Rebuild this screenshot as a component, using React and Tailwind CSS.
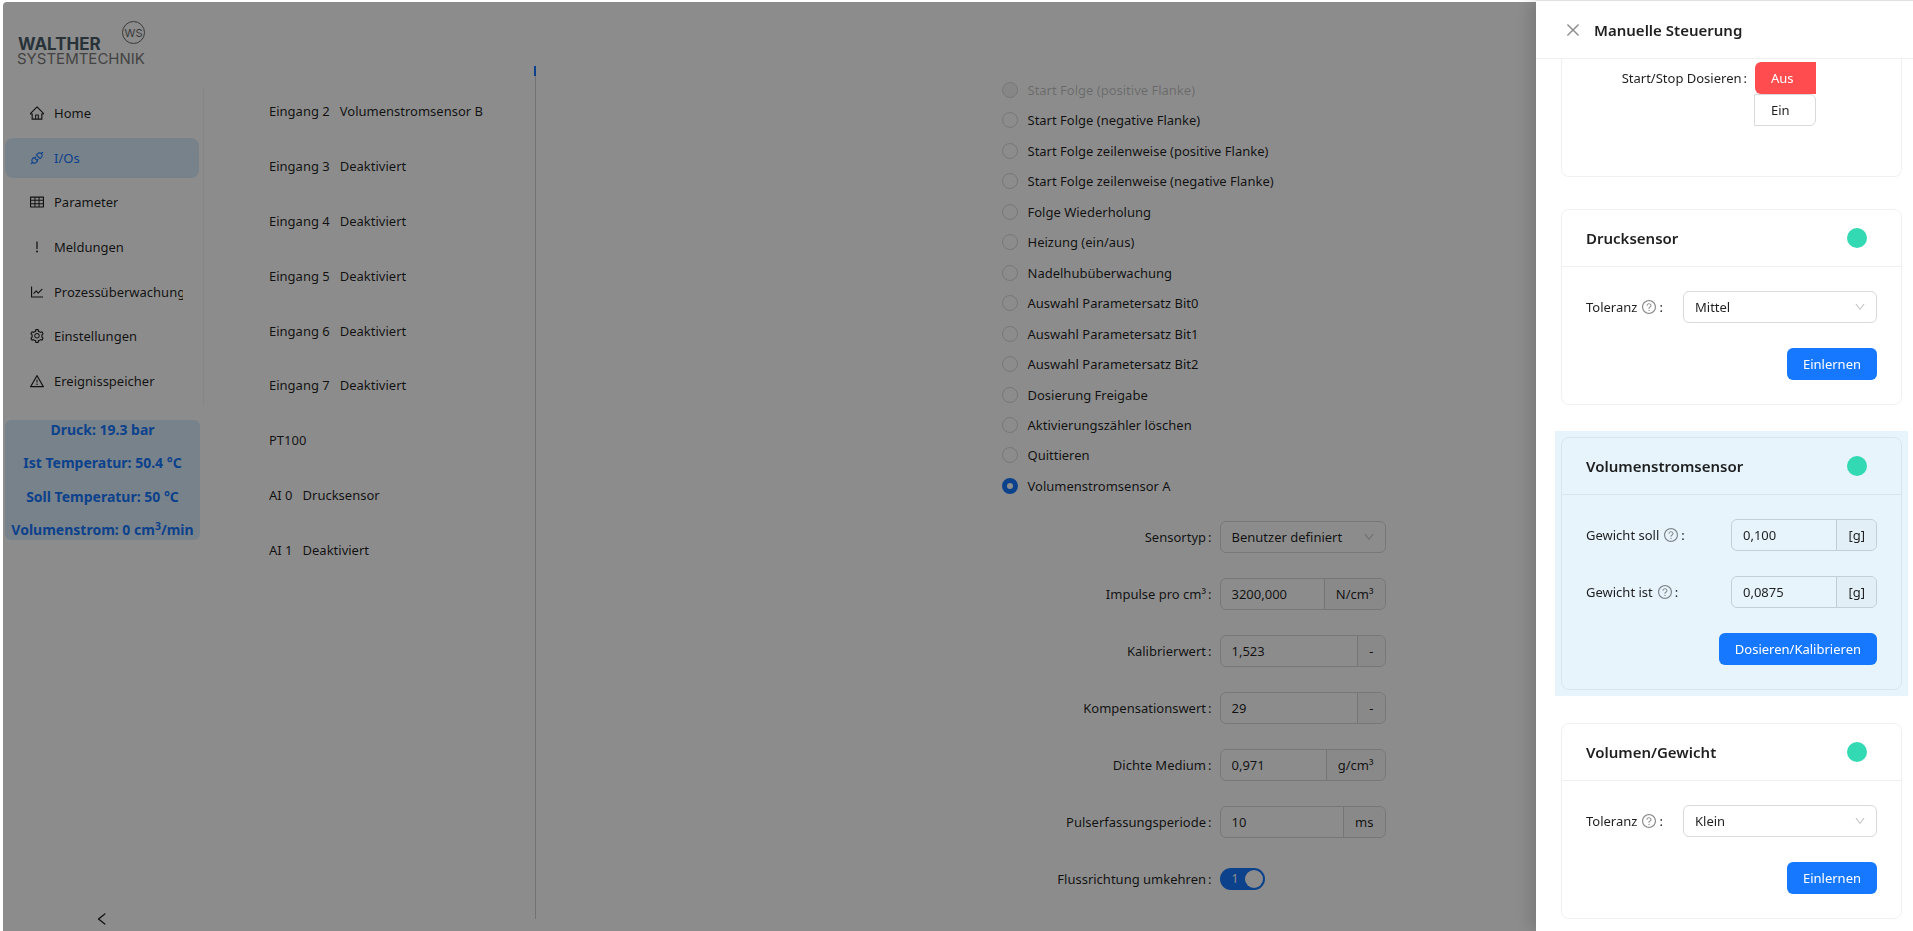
import React, { useState } from 'react';
import {
  AiOutlineApi,
  AiOutlineClose,
  AiOutlineDown,
  AiOutlineExclamation,
  AiOutlineHome,
  AiOutlineLeft,
  AiOutlineLineChart,
  AiOutlineQuestionCircle,
  AiOutlineSetting,
  AiOutlineTable,
  AiOutlineWarning,
} from 'react-icons/ai';

const menuItems = [
  { label: 'Home', icon: AiOutlineHome },
  { label: 'I/Os', icon: AiOutlineApi },
  { label: 'Parameter', icon: AiOutlineTable },
  { label: 'Meldungen', icon: AiOutlineExclamation },
  { label: 'Prozessüberwachung', icon: AiOutlineLineChart },
  { label: 'Einstellungen', icon: AiOutlineSetting },
  { label: 'Ereignisspeicher', icon: AiOutlineWarning },
];

const channels = [
  ['Eingang 2', 'Volumenstromsensor B'],
  ['Eingang 3', 'Deaktiviert'],
  ['Eingang 4', 'Deaktiviert'],
  ['Eingang 5', 'Deaktiviert'],
  ['Eingang 6', 'Deaktiviert'],
  ['Eingang 7', 'Deaktiviert'],
  ['PT100', ''],
  ['AI 0', 'Drucksensor'],
  ['AI 1', 'Deaktiviert'],
];

const functions = [
  'Start Folge (positive Flanke)',
  'Start Folge (negative Flanke)',
  'Start Folge zeilenweise (positive Flanke)',
  'Start Folge zeilenweise (negative Flanke)',
  'Folge Wiederholung',
  'Heizung (ein/aus)',
  'Nadelhubüberwachung',
  'Auswahl Parametersatz Bit0',
  'Auswahl Parametersatz Bit1',
  'Auswahl Parametersatz Bit2',
  'Dosierung Freigabe',
  'Aktivierungszähler löschen',
  'Quittieren',
  'Volumenstromsensor A',
];

const sensorFields = [
  { id: 'impulse', label: 'Impulse pro cm³', value: '3200,000', unit: 'N/cm³' },
  { id: 'kalibrierwert', label: 'Kalibrierwert', value: '1,523', unit: '-' },
  { id: 'kompensation', label: 'Kompensationswert', value: '29', unit: '-' },
  { id: 'dichte', label: 'Dichte Medium', value: '0,971', unit: 'g/cm³' },
  { id: 'periode', label: 'Pulserfassungsperiode', value: '10', unit: 'ms' },
];

const Logo = () => (
  <div className="ml-3.5 w-[134px] font-['Inter',sans-serif]">
    <div className="flex items-end justify-between pr-1.5 pl-px">
      <span className="text-[17px] leading-4 font-bold text-[#4a5c68]">WALTHER</span>
      <span className="mb-2 flex size-[23px] items-center justify-center rounded-full border border-[#6a6a6a] text-[11px] text-[#6a6a6a]">
        WS
      </span>
    </div>
    <p className="text-[15px] leading-[14px] text-[#7a7a7a]">SYSTEMTECHNIK</p>
  </div>
);

const Select = ({ id, value, className }) => (
  <div className={`relative ${className}`}>
    <select
      id={id}
      defaultValue={value}
      className="h-8 w-full appearance-none rounded-md border border-[#d9d9d9] bg-transparent px-[11px] outline-none focus:border-[#1677ff]"
    >
      <option>{value}</option>
    </select>
    <AiOutlineDown className="pointer-events-none absolute top-2.5 right-[11px] size-3 text-black/25" />
  </div>
);

const UnitInput = ({ id, value, unit, className }) => (
  <div className={`flex h-8 rounded-md border border-black/15 ${className}`}>
    <input
      id={id}
      type="text"
      defaultValue={value}
      className="min-w-0 flex-1 rounded-l-md bg-transparent px-[11px] outline-none"
    />
    <span className="flex items-center rounded-r-md border-l border-black/15 bg-black/2 px-[11px]">{unit}</span>
  </div>
);

const FormRow = ({ id, label, children }) => (
  <div className="flex items-center gap-2">
    <label htmlFor={id} className="w-[210px] text-right">
      {label}
      <span className="ml-0.5">:</span>
    </label>
    {children}
  </div>
);

const HelpLabel = ({ id, children }) => (
  <label htmlFor={id} className="flex items-center">
    {children}
    <AiOutlineQuestionCircle className="ml-1 size-4 text-black/45" />
    <span className="ml-0.5">:</span>
  </label>
);

const PrimaryButton = ({ children }) => (
  <button className="h-8 self-end rounded-md bg-[#1677ff] px-4 text-white hover:bg-[#4096ff]">{children}</button>
);

const SensorCard = ({ title, children }) => (
  <section className="rounded-lg border border-black/6">
    <header className="flex h-[57px] items-center justify-between border-b border-black/6 pr-[34px] pl-6">
      <h3 className="text-[15px] font-semibold">{title}</h3>
      <span className="size-5 rounded-full bg-[#33d9b2]" />
    </header>
    <div className="flex flex-col gap-[25px] p-6">{children}</div>
  </section>
);

const Sidebar = () => (
  <aside className="flex w-[201px] shrink-0 flex-col pt-[21px]">
    <Logo />
    <nav className="mt-[22px] flex h-[317px] flex-col justify-between border-r border-black/4 pt-[5px] pb-1 pl-0.5">
      {menuItems.map(({ label, icon: Icon }) => (
        <a
          key={label}
          href="#"
          className={`mr-1 flex h-10 items-center gap-[9px] rounded-lg pr-4 pl-6 ${
            label === 'I/Os' ? 'bg-[#dbedfc] text-[#1677ff]' : ''
          }`}
        >
          <Icon className="size-4 shrink-0" />
          <span className="overflow-hidden whitespace-nowrap">{label}</span>
        </a>
      ))}
    </nav>
    <div className="mt-[15px] mr-1 ml-0.5 flex h-[120px] flex-col justify-between rounded-md bg-[#dbedfc] text-center text-sm leading-5 font-bold text-[#1677ff]">
      <p>Druck: 19.3 bar</p>
      <p>Ist Temperatur: 50.4 °C</p>
      <p>Soll Temperatur: 50 °C</p>
      <p>
        Volumenstrom: 0 cm<sup>3</sup>/min
      </p>
    </div>
    <button aria-label="Menü einklappen" className="mt-auto mr-1 mb-1 self-center">
      <AiOutlineLeft className="size-4" />
    </button>
  </aside>
);

const Drawer = () => {
  const [dosing, setDosing] = useState(false);

  return (
    <aside className="fixed inset-y-0 right-0 flex w-[377px] flex-col overflow-hidden border-t border-[#e0e0e0] bg-white shadow-[-6px_0_16px_rgba(0,0,0,0.15)]">
      <header className="flex h-[58px] shrink-0 items-center gap-3 border-b border-black/6 px-7">
        <button aria-label="Schließen" className="text-black/45">
          <AiOutlineClose className="size-[18px]" />
        </button>
        <h2 className="text-[15px] font-semibold">Manuelle Steuerung</h2>
      </header>

      <div className="flex flex-col pr-[5px] pl-[19px]">
        <section className="mx-1.5 mb-8 h-[118px] rounded-b-lg border border-t-0 border-black/6 pt-[3px] pr-[85px]">
          <div className="flex justify-end gap-2">
            <span className="leading-8">
              Start/Stop Dosieren<span className="ml-0.5">:</span>
            </span>
            <div className="flex w-[61px] flex-col">
              <button
                aria-pressed={!dosing}
                onClick={() => setDosing(false)}
                className="h-8 rounded-l-md bg-[#ff4d4f] px-4 text-left text-white"
              >
                Aus
              </button>
              <button
                aria-pressed={dosing}
                onClick={() => setDosing(true)}
                className="-ml-px h-8 rounded-r-md border border-[#d9d9d9] px-4 text-left"
              >
                Ein
              </button>
            </div>
          </div>
        </section>

        <div className="mx-1.5 mb-[26px]">
          <SensorCard title="Drucksensor">
            <div className="flex items-center justify-between">
              <HelpLabel id="toleranz-druck">Toleranz</HelpLabel>
              <Select id="toleranz-druck" value="Mittel" className="w-[194px]" />
            </div>
            <PrimaryButton>Einlernen</PrimaryButton>
          </SensorCard>
        </div>

        <div className="mb-[27px] bg-[#e7f4fb] p-1.5">
          <SensorCard title="Volumenstromsensor">
            <div className="flex items-center justify-between">
              <HelpLabel id="gewicht-soll">Gewicht soll</HelpLabel>
              <UnitInput id="gewicht-soll" value="0,100" unit="[g]" className="w-[146px]" />
            </div>
            <div className="flex items-center justify-between">
              <HelpLabel id="gewicht-ist">Gewicht ist</HelpLabel>
              <UnitInput id="gewicht-ist" value="0,0875" unit="[g]" className="w-[146px]" />
            </div>
            <PrimaryButton>Dosieren/Kalibrieren</PrimaryButton>
          </SensorCard>
        </div>

        <div className="mx-1.5">
          <SensorCard title="Volumen/Gewicht">
            <div className="flex items-center justify-between">
              <HelpLabel id="toleranz-volumen">Toleranz</HelpLabel>
              <Select id="toleranz-volumen" value="Klein" className="w-[194px]" />
            </div>
            <PrimaryButton>Einlernen</PrimaryButton>
          </SensorCard>
        </div>
      </div>
    </aside>
  );
};

const App = () => {
  const [selected, setSelected] = useState('Volumenstromsensor A');
  const [reversed, setReversed] = useState(true);

  return (
    <div className="font-['Noto_Sans',sans-serif] text-[13px] leading-5 text-black/88">
      <div className="flex min-h-screen pl-[3px]">
        <Sidebar />

        {/* Channel list */}
        <div className="mt-[66px] mb-3 flex w-[332px] shrink-0">
          <ul className="mt-[34px] flex h-[461px] flex-1 flex-col justify-between pl-[65px]">
            {channels.map(([name, value]) => (
              <li key={name} className="flex h-[22px] items-center gap-2.5">
                <span>{name}</span>
                <span>{value}</span>
              </li>
            ))}
          </ul>
          <div className="w-0.5 border-r border-[#d0d0d0]">
            <div className="h-2.5 w-0.5 bg-[#1677ff]" />
          </div>
        </div>

        {/* Channel settings */}
        <main className="flex-1 pt-[79px] pb-8">
          <div className="mx-auto w-[446px]">
            <fieldset className="flex h-[418px] flex-col justify-between">
              {functions.map((name, i) => (
                <label key={name} className={`flex items-center gap-2.5 leading-[22px] ${i === 0 ? 'text-black/25' : ''}`}>
                  <input
                    type="radio"
                    name="function"
                    disabled={i === 0}
                    checked={selected === name}
                    onChange={() => setSelected(name)}
                    className="size-4 appearance-none rounded-full border border-[#d9d9d9] checked:border-[5px] checked:border-[#1677ff] disabled:bg-black/4"
                  />
                  {name}
                </label>
              ))}
            </fieldset>

            <div className="mt-6 flex flex-col gap-[25px]">
              <FormRow id="sensortyp" label="Sensortyp">
                <Select id="sensortyp" value="Benutzer definiert" className="w-[166px]" />
              </FormRow>
              {sensorFields.map(({ id, label, value, unit }) => (
                <FormRow key={id} id={id} label={label}>
                  <UnitInput id={id} value={value} unit={unit} className="w-[166px]" />
                </FormRow>
              ))}
              <div className="flex h-8 items-center">
                <FormRow id="flussrichtung" label="Flussrichtung umkehren">
                  <button
                    id="flussrichtung"
                    role="switch"
                    aria-checked={reversed}
                    onClick={() => setReversed(!reversed)}
                    className="flex h-[22px] w-[45px] items-center justify-between rounded-full bg-[#1677ff] pr-0.5 pl-3 text-xs text-white"
                  >
                    1
                    <span className="size-[18px] rounded-full bg-white" />
                  </button>
                </FormRow>
              </div>
            </div>
          </div>
        </main>
      </div>

      {/* Mask behind the drawer */}
      <div className="fixed top-0.5 right-0 bottom-0 left-[3px] rounded-tl-sm bg-black/45" />
      <Drawer />
    </div>
  );
};

export default App;
